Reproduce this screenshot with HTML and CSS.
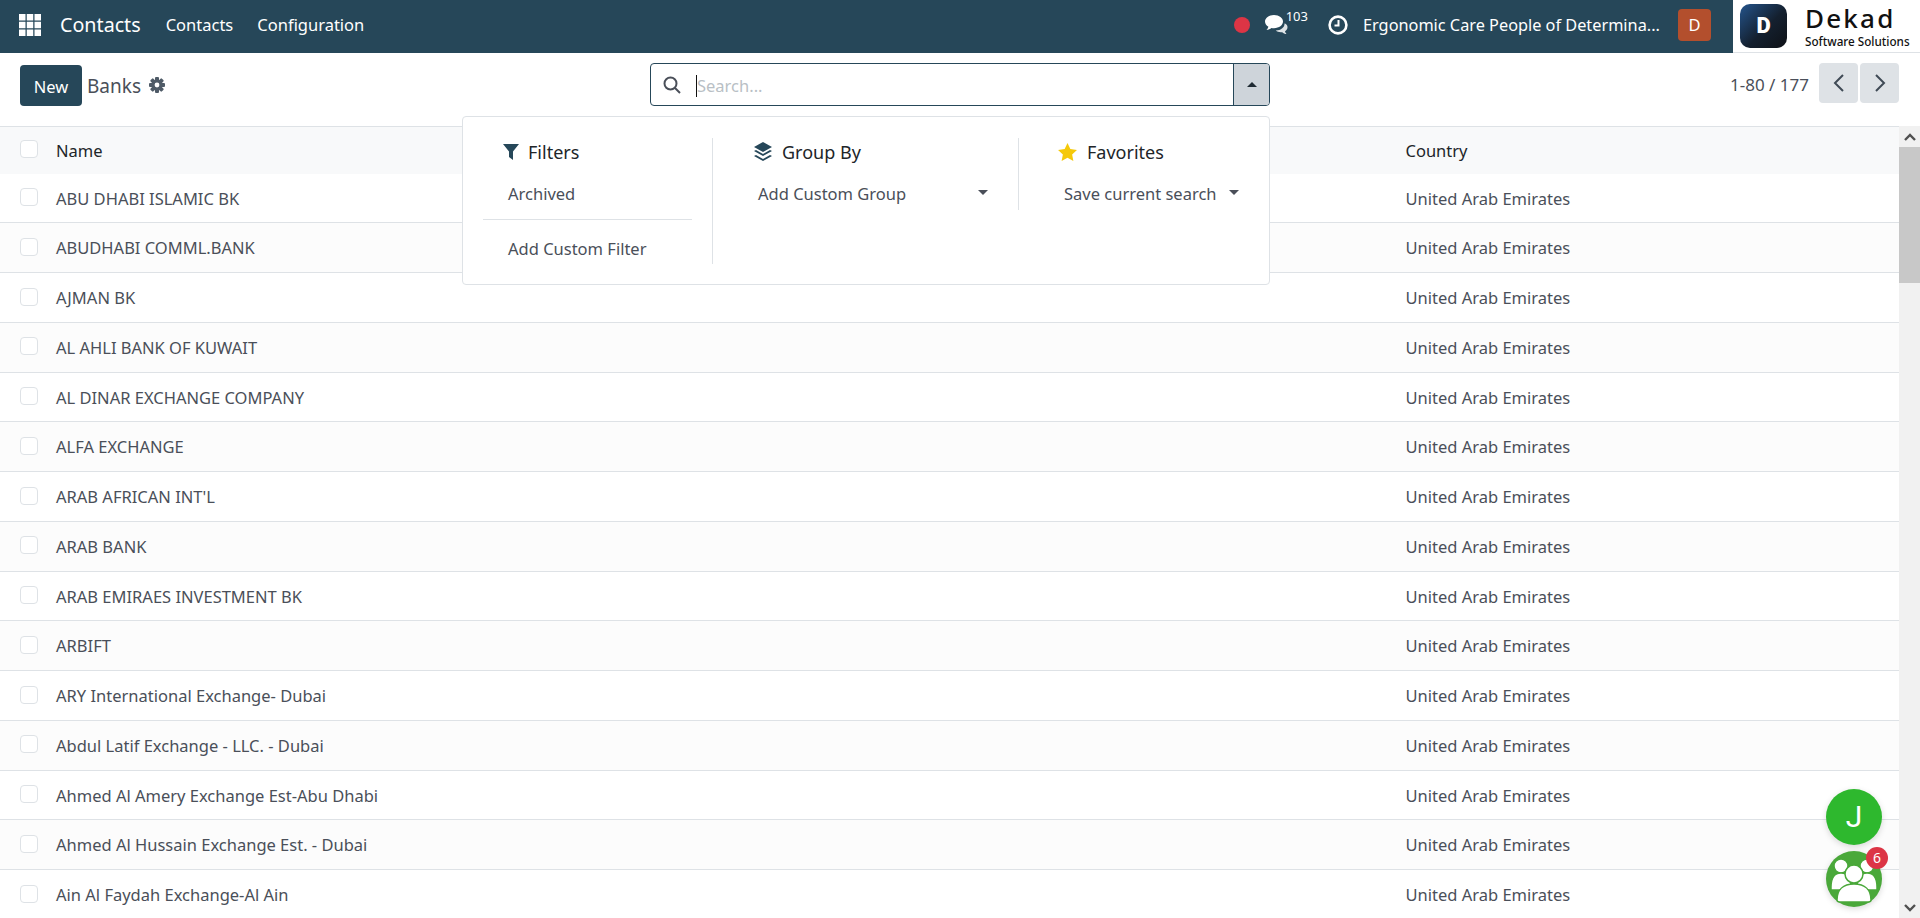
FILE: index.html
```html
<!DOCTYPE html>
<html lang="en">

<head>
    <meta charset="UTF-8">
    <meta name="viewport" content="width=device-width, initial-scale=1.0">
    <title>Banks</title>
    <link rel="stylesheet" href="styles.css">
</head>

<body>
    <header class="navbar">
        <svg class="apps_icon" viewBox="0 0 22 22" fill="#fff">
            <rect x="0" y="0" width="6.500" height="6.500" /><rect x="7.750" y="0" width="6.500" height="6.500" /><rect x="15.500" y="0" width="6.500" height="6.500" />
            <rect x="0" y="7.750" width="6.500" height="6.500" /><rect x="7.750" y="7.750" width="6.500" height="6.500" /><rect x="15.500" y="7.750" width="6.500" height="6.500" />
            <rect x="0" y="15.500" width="6.500" height="6.500" /><rect x="7.750" y="15.500" width="6.500" height="6.500" /><rect x="15.500" y="15.500" width="6.500" height="6.500" />
        </svg>
        <span class="brand">Contacts</span>
        <nav class="menu_links">
            <a>Contacts</a>
            <a>Configuration</a>
        </nav>
        <div class="systray">
            <i class="rec_dot"></i>
            <div class="messages">
                <svg class="chat_icon" viewBox="0 0 24 22" fill="#fff">
                    <path d="M10 1C4.800 1 1 4 1 7.600c0 2.200 1.300 4 3.400 5.200-.3 1.200-1 2.200-1.900 3 2 0 3.700-.7 5-1.800.8.100 1.600.2 2.500.2 5.200 0 9-3 9-6.600S15.200 1 10 1z" />
                    <path d="M20.500 9.500c.3 3.700-3.400 6.800-8.700 7.100 1.200 1.100 3 1.700 5 1.700.5 0 1 0 1.500-.1 1 1 2.400 1.800 4.200 1.800-.8-.8-1.300-1.700-1.500-2.700 1.500-1 2.500-2.500 2.500-4.100 0-1.500-.9-2.800-2.500-3.700z" opacity=".85" />
                </svg>
                <sup>103</sup>
            </div>
            <svg class="clock_icon" viewBox="0 0 20 20" fill="none" stroke="#fff">
                <circle cx="10" cy="10" r="8.400" stroke-width="2.600" />
                <path d="M10.500 5v5.500H6.500" stroke-width="2" />
            </svg>
            <span class="company">Ergonomic Care People of Determina...</span>
            <span class="avatar">D</span>
        </div>
        <div class="logo_box">
            <div class="logo_mark">D</div>
            <div class="logo_text">
                <b>Dekad</b>
                <small>Software Solutions</small>
            </div>
        </div>
    </header>

    <section class="control_panel">
        <div class="cp_left">
            <button class="new_btn">New</button>
            <span class="cp_title">Banks</span>
            <svg class="gear_icon" viewBox="0 0 16 16" fill="#4f5b67">
                <g>
                    <rect x="6" y="0" width="4" height="16" rx="1" />
                    <rect x="6" y="0" width="4" height="16" rx="1" transform="rotate(45 8 8)" />
                    <rect x="6" y="0" width="4" height="16" rx="1" transform="rotate(90 8 8)" />
                    <rect x="6" y="0" width="4" height="16" rx="1" transform="rotate(135 8 8)" />
                </g>
                <circle cx="8" cy="8" r="5.600" />
                <circle cx="8" cy="8" r="2.400" fill="#fff" />
            </svg>
        </div>
        <div class="search_box">
            <svg class="search_icon" viewBox="0 0 18 18" fill="none" stroke="#4a4f59" stroke-width="2">
                <circle cx="7.500" cy="7.500" r="6" />
                <path d="M12 12l5 5" />
            </svg>
            <div class="search_input"><i class="text_cursor"></i><span>Search...</span></div>
            <div class="search_toggle"><i class="caret_up"></i></div>
        </div>
        <div class="pager">
            <span class="pager_text">1-80 / 177</span>
            <div class="pager_btns">
                <button><svg viewBox="0 0 12 20" fill="none" stroke="#3f4a55" stroke-width="2"><path d="M10 2L2 10l8 8" /></svg></button>
                <button><svg viewBox="0 0 12 20" fill="none" stroke="#3f4a55" stroke-width="2"><path d="M2 2l8 8-8 8" /></svg></button>
            </div>
        </div>
    </section>

    <main class="content">
        <div class="list">
            <div class="list_row list_head">
                <i class="check"></i><span>Name</span><span>Country</span>
            </div>
            <div class="list_row"><i class="check"></i><span>ABU DHABI ISLAMIC BK</span><span>United Arab Emirates</span></div>
            <div class="list_row"><i class="check"></i><span>ABUDHABI COMML.BANK</span><span>United Arab Emirates</span></div>
            <div class="list_row"><i class="check"></i><span>AJMAN BK</span><span>United Arab Emirates</span></div>
            <div class="list_row"><i class="check"></i><span>AL AHLI BANK OF KUWAIT</span><span>United Arab Emirates</span></div>
            <div class="list_row"><i class="check"></i><span>AL DINAR EXCHANGE COMPANY</span><span>United Arab Emirates</span></div>
            <div class="list_row"><i class="check"></i><span>ALFA EXCHANGE</span><span>United Arab Emirates</span></div>
            <div class="list_row"><i class="check"></i><span>ARAB AFRICAN INT'L</span><span>United Arab Emirates</span></div>
            <div class="list_row"><i class="check"></i><span>ARAB BANK</span><span>United Arab Emirates</span></div>
            <div class="list_row"><i class="check"></i><span>ARAB EMIRAES INVESTMENT BK</span><span>United Arab Emirates</span></div>
            <div class="list_row"><i class="check"></i><span>ARBIFT</span><span>United Arab Emirates</span></div>
            <div class="list_row"><i class="check"></i><span>ARY International Exchange- Dubai</span><span>United Arab Emirates</span></div>
            <div class="list_row"><i class="check"></i><span>Abdul Latif Exchange - LLC. - Dubai</span><span>United Arab Emirates</span></div>
            <div class="list_row"><i class="check"></i><span>Ahmed Al Amery Exchange Est-Abu Dhabi</span><span>United Arab Emirates</span></div>
            <div class="list_row"><i class="check"></i><span>Ahmed Al Hussain Exchange Est. - Dubai</span><span>United Arab Emirates</span></div>
            <div class="list_row"><i class="check"></i><span>Ain Al Faydah Exchange-Al Ain</span><span>United Arab Emirates</span></div>
        </div>
        <div class="scrollbar">
            <div class="scroll_arrow"><svg viewBox="0 0 12 8" fill="none" stroke="#505050" stroke-width="2.400"><path d="M1 7l5-5 5 5" /></svg></div>
            <div class="scroll_thumb"></div>
            <div class="scroll_track"></div>
            <div class="scroll_arrow"><svg viewBox="0 0 12 8" fill="none" stroke="#505050" stroke-width="2.400"><path d="M1 1l5 5 5-5" /></svg></div>
        </div>
    </main>

    <div class="search_menu">
        <div class="menu_col filters">
            <h4>
                <svg class="menu_icon" viewBox="0 0 16 16" fill="#264759"><path d="M0 0h16L10 7.500V16l-4-3V7.500z" /></svg>
                Filters
            </h4>
            <a class="menu_item">Archived</a>
            <hr>
            <a class="menu_item">Add Custom Filter</a>
        </div>
        <div class="menu_col groupby">
            <h4>
                <svg class="menu_icon layers" viewBox="0 0 20 20" fill="#264759">
                    <path d="M10 0l9 5-9 5-9-5z" />
                    <path d="M1 9l2-1 7 4 7-4 2 1-9 5z" />
                    <path d="M1 14l2-1 7 4 7-4 2 1-9 5z" />
                </svg>
                Group By
            </h4>
            <a class="menu_item with_caret">Add Custom Group<i class="caret_down"></i></a>
        </div>
        <div class="menu_col favorites">
            <h4>
                <svg class="menu_icon star" viewBox="0 0 20 19" fill="#f5c90a"><path d="M10 0l3 6.400 7 .9-5.100 4.800 1.300 6.900L10 15.600 3.800 19l1.300-6.900L0 7.300l7-.9z" /></svg>
                Favorites
            </h4>
            <a class="menu_item with_caret">Save current search<i class="caret_down"></i></a>
        </div>
    </div>

    <div class="float_btns">
        <div class="float_circle user_circle">J</div>
        <div class="float_circle group_circle">
            <svg viewBox="0 0 56 56" fill="#fff" stroke="#4aa83a" stroke-width="1.500">
                <circle cx="15" cy="15" r="7" />
                <circle cx="41" cy="15" r="7" />
                <path d="M5 36c0-9 4-14 10-14s10 5 10 14v3H5z" />
                <path d="M31 36c0-9 4-14 10-14s10 5 10 14v3H31z" />
                <circle cx="28" cy="23" r="9" />
                <path d="M11 49c0-10 6-16 17-16s17 6 17 16c0 1-1 2-3 2H14c-2 0-3-1-3-2z" />
            </svg>
            <span class="badge">6</span>
        </div>
    </div>
</body>

</html>
```

FILE: styles.css
```css
* {
    margin: 0;
    padding: 0;
    box-sizing: border-box;
}

html,
body {
    height: 100%;
    overflow: hidden;
}

body {
    position: relative;
    display: flex;
    flex-direction: column;
    font-family: "Noto Sans", "Open Sans", sans-serif;
    font-size: 16.5px;
    color: #4a4f59;
    background: #fff;
}

/* navbar */
.navbar {
    display: flex;
    align-items: center;
    flex: none;
    height: 53px;
    padding-left: 19px;
    padding-bottom: 4px;
    background: #264759;
    color: #fff;
}

.apps_icon {
    width: 22px;
    height: 22px;
    margin-right: 19px;
}

.brand {
    font-size: 19.7px;
    margin-right: 25px;
}

.menu_links {
    display: flex;
    gap: 24px;
}

.systray {
    display: flex;
    align-items: center;
    margin-left: auto;
    margin-right: 22px;
}

.rec_dot {
    width: 16px;
    height: 16px;
    border-radius: 50%;
    background: #dc3545;
    margin-right: 14px;
}

.messages {
    display: flex;
    align-items: flex-start;
    margin-right: 20px;
}

.chat_icon {
    width: 24px;
    height: 22px;
}

.messages sup {
    font-size: 13px;
    line-height: 13px;
    margin-left: -2px;
    margin-top: -4px;
}

.clock_icon {
    width: 20px;
    height: 20px;
    margin-right: 15px;
}

.company {
    width: 299px;
    font-size: 16.3px;
    white-space: nowrap;
    margin-right: 16px;
}

.avatar {
    width: 33px;
    height: 32px;
    line-height: 32px;
    text-align: center;
    border-radius: 4px;
    background: #b34f2d;
}

.logo_box {
    display: flex;
    align-items: center;
    align-self: stretch;
    width: 187px;
    height: 53px;
    padding-left: 7px;
    background: #fff;
    border-bottom: 1px solid #dee2e6;
    color: #111;
}

.logo_mark {
    width: 47px;
    height: 44px;
    line-height: 44px;
    text-align: center;
    border-radius: 10px;
    background: linear-gradient(135deg, #24548c 0%, #14202f 55%, #0e1116 100%);
    color: #fff;
    font-size: 22px;
    font-weight: 900;
    font-family: Roboto, sans-serif;
}

.logo_text {
    display: flex;
    flex-direction: column;
    gap: 3px;
    margin-left: 18px;
}

.logo_text b {
    font-size: 26px;
    line-height: 27px;
    font-weight: 500;
    letter-spacing: 2.2px;
}

.logo_text small {
    font-size: 11.7px;
    line-height: 12px;
    font-weight: 500;
    white-space: nowrap;
}

/* control panel */
.control_panel {
    display: flex;
    align-items: flex-start;
    flex: none;
    height: 73px;
    padding-top: 10px;
    padding-left: 20px;
    padding-right: 21px;
}

.cp_left {
    display: flex;
    align-items: center;
    width: 630px;
    height: 43px;
}

.new_btn {
    width: 62px;
    height: 41px;
    margin-top: 1px;
    padding-top: 2px;
    border: 0;
    border-radius: 4px;
    background: #264759;
    color: #fff;
    font: inherit;
}

.cp_title {
    margin-left: 5px;
    padding-top: 2px;
    font-size: 19px;
}

.gear_icon {
    width: 16px;
    height: 16px;
    margin-left: 8px;
    margin-top: 1px;
}

.search_box {
    display: flex;
    align-items: center;
    width: 620px;
    height: 43px;
    border: 1px solid #264759;
    border-radius: 4px;
    overflow: hidden;
}

.search_icon {
    width: 18px;
    height: 18px;
    margin-left: 12px;
    flex: none;
}

.search_input {
    display: flex;
    align-items: center;
    flex: 1;
    margin-left: 15px;
    padding-top: 2px;
    color: #b9bfc5;
}

.text_cursor {
    width: 1px;
    height: 22px;
    background: #111;
}

.search_toggle {
    display: flex;
    align-items: center;
    justify-content: center;
    width: 36px;
    height: 100%;
    background: #ced4da;
    border-left: 1px solid #264759;
}

.caret_up {
    border-left: 5px solid transparent;
    border-right: 5px solid transparent;
    border-bottom: 5px solid #1f2a33;
}

.pager {
    display: flex;
    align-items: center;
    margin-left: auto;
}

.pager_text {
    margin-right: 10px;
    padding-top: 2px;
    font-size: 17px;
}

.pager_btns {
    display: flex;
    gap: 2px;
}

.pager_btns button {
    display: flex;
    align-items: center;
    justify-content: center;
    width: 39px;
    height: 40px;
    border: 0;
    border-radius: 4px;
    background: #dee2e6;
}

.pager_btns svg {
    width: 12px;
    height: 20px;
}

/* list */
.content {
    display: flex;
    flex: 1;
    min-height: 0;
}

.list {
    flex: 1;
    overflow: hidden;
    border-top: 1px solid #dee2e6;
}

.list_row {
    display: grid;
    grid-template-columns: 36px 1349.5px 1fr;
    align-items: center;
    height: 49.75px;
    padding-left: 20px;
    border-bottom: 1px solid #dee2e6;
}

.list_row:nth-child(odd) {
    background: #fcfcfc;
}

.list_head {
    height: 46.7px;
    border-bottom: 0;
    color: #212529;
    background: #f8f9fa !important;
}

.check {
    display: block;
    width: 18px;
    height: 18px;
    margin-top: -2px;
    border: 1px solid #dee2e6;
    border-radius: 4px;
    background: #fff;
}

.scrollbar {
    display: flex;
    flex-direction: column;
    flex: none;
    width: 21px;
    background: #f1f1f1;
}

.scroll_arrow {
    display: flex;
    align-items: center;
    justify-content: center;
    height: 21px;
}

.scroll_arrow svg {
    width: 12px;
    height: 8px;
}

.scroll_thumb {
    height: 136px;
    background: #c8c8c8;
}

.scroll_track {
    flex: 1;
}

/* search dropdown */
.search_menu {
    position: absolute;
    top: 116px;
    left: 462px;
    display: flex;
    width: 808px;
    height: 169px;
    padding-top: 21px;
    background: #fff;
    border: 1px solid #dee2e6;
    border-radius: 4px;
}

.menu_col {
    flex: none;
}

.menu_col h4 {
    display: flex;
    align-items: center;
    height: 28px;
    font-size: 18px;
    font-weight: 400;
    color: #212529;
}

.menu_icon {
    width: 16px;
    height: 16px;
    margin-right: 9px;
}

.menu_icon.layers {
    width: 20px;
    height: 20px;
    margin-right: 9px;
}

.menu_icon.star {
    width: 19px;
    height: 18px;
    margin-right: 10px;
}

.menu_item {
    display: flex;
    align-items: center;
    height: 28px;
    margin-top: 13px;
    white-space: nowrap;
}

.caret_down {
    border-left: 5px solid transparent;
    border-right: 5px solid transparent;
    border-top: 5px solid #4a4f59;
    margin-top: -2px;
}

.filters {
    width: 250px;
    height: 126px;
    padding-left: 20px;
    padding-right: 20px;
    border-right: 1px solid #dee2e6;
}

.filters h4 {
    padding-left: 20px;
}

.filters .menu_item {
    padding-left: 25px;
}

.filters hr {
    border: 0;
    border-top: 1px solid #dee2e6;
    margin-top: 12px;
}

.filters hr+.menu_item {
    margin-top: 14px;
}

.groupby {
    width: 306px;
    height: 72px;
    padding-left: 40px;
    padding-right: 30px;
    border-right: 1px solid #dee2e6;
}

.groupby .menu_item {
    padding-left: 5px;
}

.favorites {
    flex: 1;
    padding-left: 39px;
    padding-right: 30px;
}

.favorites .menu_item {
    padding-left: 6px;
}

.with_caret {
    justify-content: space-between;
}

/* floating buttons */
.float_btns {
    position: absolute;
    top: 789px;
    left: 1826px;
    display: flex;
    flex-direction: column;
    gap: 6px;
}

.float_circle {
    position: relative;
    width: 56px;
    height: 56px;
    border-radius: 50%;
    text-align: center;
    color: #fff;
    box-shadow: 0 2px 6px rgba(0, 0, 0, .15);
}

.user_circle {
    background: #2eb82e;
    font-family: Roboto, sans-serif;
    font-size: 30px;
    line-height: 56px;
}

.group_circle {
    background: #4aa83a;
}

.group_circle svg {
    display: block;
    width: 56px;
    height: 56px;
}

.badge {
    position: absolute;
    top: -4px;
    right: -6px;
    width: 22px;
    height: 22px;
    line-height: 22px;
    border-radius: 50%;
    background: #dc3545;
    font-size: 14px;
}
```
